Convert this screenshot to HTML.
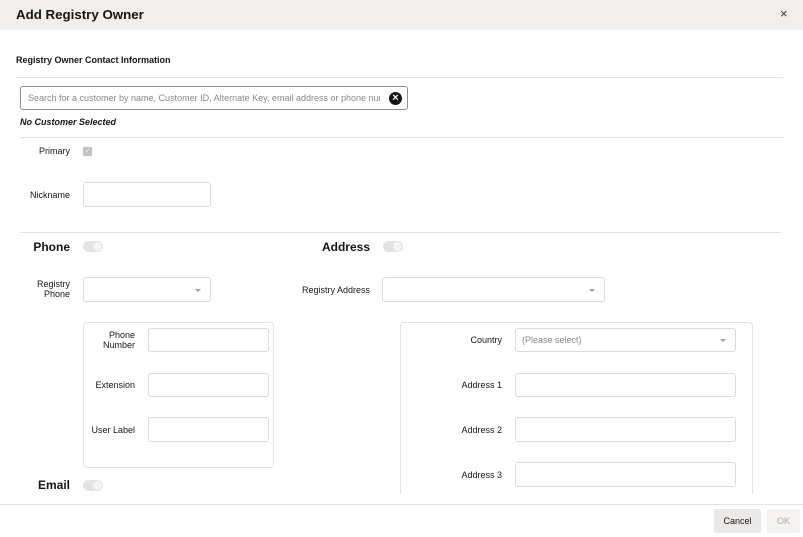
<!DOCTYPE html>
<html><head><style>
*{margin:0;padding:0;box-sizing:border-box}
body{width:803px;height:537px;position:relative;background:#fff;font-family:"Liberation Sans",sans-serif;color:#161513;overflow:hidden}
.a{position:absolute}
.hdr{left:0;top:0;width:803px;height:30px;background:#f1efed}
.t{font-size:13.3px;font-weight:bold;left:16px;top:7px}
.lbl{font-size:9px;text-align:right;line-height:10px}
.inp{border:1px solid #dcdbd9;border-radius:3px;background:#fff}
.line{height:1px;background:#e4e3e1}
.tog{width:20px;height:11px;border-radius:6px;background:#e4e3e1}
.tog:after{content:"";position:absolute;right:1px;top:1px;width:9px;height:9px;border-radius:5px;background:#f5f4f3}
.h{font-size:12px;font-weight:bold;text-align:right}
.car{width:0;height:0;border-left:3px solid transparent;border-right:3px solid transparent;border-top:3px solid #9e9d9b}
.panel{border:1px solid #e4e3e1;border-radius:4px}
</style></head><body>
<div class="a hdr"></div>
<div class="a t">Add Registry Owner</div>
<div class="a" style="left:780px;top:6px;font-size:13px;color:#333">×</div>
<div class="a" style="left:16px;top:55px;font-size:9px;font-weight:bold">Registry Owner Contact Information</div>
<div class="a line" style="left:16px;top:77px;width:767px"></div>
<div class="a" style="left:20px;top:86px;width:388px;height:24px;border:1px solid #8f8d8a;border-radius:3px"></div>
<div class="a" style="left:28px;top:93px;font-size:9px;color:#8a8886;width:352px;overflow:hidden;white-space:nowrap">Search for a customer by name, Customer ID, Alternate Key, email address or phone number</div>
<div class="a" style="left:389px;top:92px;width:13px;height:13px;border-radius:7px;background:#161513;color:#fff;font-size:11px;line-height:13px;text-align:center;font-weight:bold">×</div>
<div class="a" style="left:20px;top:117px;font-size:9px;font-style:italic;font-weight:bold">No Customer Selected</div>
<div class="a line" style="left:20px;top:137px;width:763px"></div>
<div class="a lbl" style="left:20px;top:146px;width:50px">Primary</div>
<div class="a" style="left:83px;top:147px;width:9px;height:9px;background:#c3c2c0;border-radius:1px;color:#fff;font-size:7px;line-height:9px;text-align:center">✓</div>
<div class="a lbl" style="left:10px;top:190px;width:60px">Nickname</div>
<div class="a inp" style="left:83px;top:182px;width:128px;height:25px"></div>
<div class="a line" style="left:20px;top:232px;width:761px"></div>
<div class="a h" style="left:10px;top:240px;width:60px">Phone</div>
<div class="a tog" style="left:83px;top:241px"></div>
<div class="a h" style="left:290px;top:240px;width:80px">Address</div>
<div class="a tog" style="left:383px;top:241px"></div>
<div class="a lbl" style="left:10px;top:279px;width:60px">Registry<br>Phone</div>
<div class="a inp" style="left:83px;top:277px;width:128px;height:25px"></div>
<div class="a car" style="left:195px;top:289px"></div>
<div class="a lbl" style="left:270px;top:285px;width:100px">Registry Address</div>
<div class="a inp" style="left:382px;top:277px;width:223px;height:25px"></div>
<div class="a car" style="left:589px;top:289px"></div>
<div class="a panel" style="left:83px;top:322px;width:191px;height:146px"></div>
<div class="a lbl" style="left:84px;top:330px;width:51px">Phone<br>Number</div>
<div class="a inp" style="left:148px;top:328px;width:121px;height:24px"></div>
<div class="a lbl" style="left:84px;top:380px;width:51px">Extension</div>
<div class="a inp" style="left:148px;top:373px;width:121px;height:24px"></div>
<div class="a lbl" style="left:84px;top:425px;width:51px">User Label</div>
<div class="a inp" style="left:148px;top:417px;width:121px;height:25px"></div>
<div class="a h" style="left:10px;top:478px;width:60px">Email</div>
<div class="a tog" style="left:83px;top:480px"></div>
<div class="a panel" style="left:400px;top:322px;width:353px;height:190px"></div>
<div class="a lbl" style="left:420px;top:335px;width:82px">Country</div>
<div class="a inp" style="left:515px;top:328px;width:221px;height:24px"></div>
<div class="a" style="left:522px;top:335px;font-size:9px;color:#8a8886">(Please select)</div>
<div class="a car" style="left:720px;top:339px"></div>
<div class="a lbl" style="left:420px;top:380px;width:82px">Address 1</div>
<div class="a inp" style="left:515px;top:373px;width:221px;height:24px"></div>
<div class="a lbl" style="left:420px;top:425px;width:82px">Address 2</div>
<div class="a inp" style="left:515px;top:417px;width:221px;height:25px"></div>
<div class="a lbl" style="left:420px;top:470px;width:82px">Address 3</div>
<div class="a inp" style="left:515px;top:462px;width:221px;height:25px"></div>
<div class="a" style="left:0;top:494px;width:803px;height:10px;background:#fff"></div>
<div class="a" style="left:0;top:504px;width:803px;height:33px;background:#fff;border-top:1px solid #e4e3e1"></div>
<div class="a" style="left:714px;top:509px;width:47px;height:24px;background:#ebe9e7;border-radius:2px;font-size:9px;line-height:24px;text-align:center">Cancel</div>
<div class="a" style="left:767px;top:509px;width:33px;height:24px;background:#f4f3f2;border-radius:2px;font-size:9px;line-height:24px;text-align:center;color:#aaa">OK</div>
</body></html>
